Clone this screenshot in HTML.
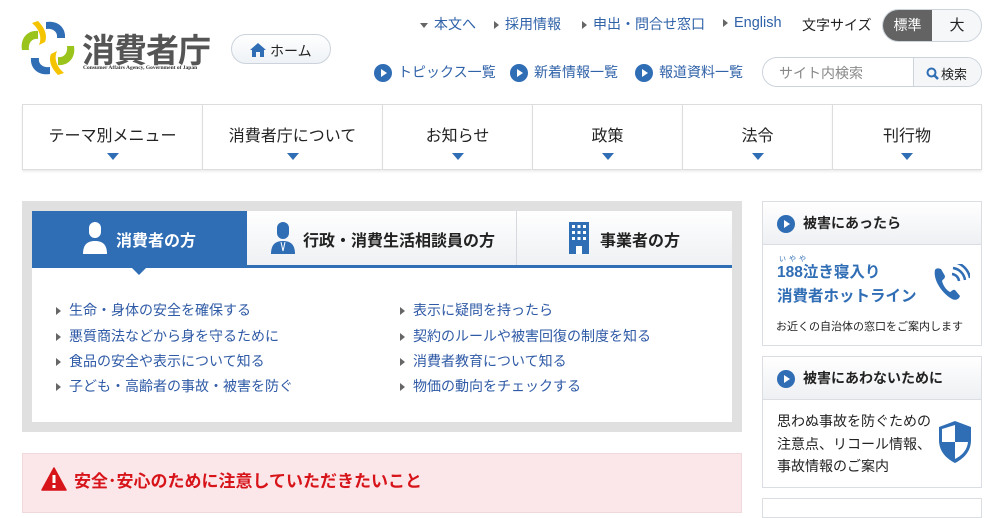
<!DOCTYPE html>
<html><head><meta charset="utf-8">
<style>
*{margin:0;padding:0;box-sizing:border-box}
body{width:1004px;height:505px;overflow:hidden;background:#fff;font-family:"Liberation Sans","Noto Sans CJK JP",sans-serif;color:#222;position:relative}
.a{position:absolute;white-space:nowrap}
.blue{color:#2f62a8}
.circ{display:inline-block;width:18px;height:18px;border-radius:50%;background:#2f6db5;position:relative;vertical-align:middle}
.circ:after{content:"";position:absolute;left:7px;top:5px;border-left:6px solid #fff;border-top:4px solid transparent;border-bottom:4px solid transparent}
.tri{display:inline-block;border-left:5px solid #666;border-top:4px solid transparent;border-bottom:4px solid transparent;margin-right:8px;vertical-align:middle}
.nav{position:absolute;top:104px;height:66px;border-top:1px solid #ddd;border-bottom:1px solid #ddd;border-left:1px solid #ddd;text-align:center;font-size:16px;padding-top:17px;box-shadow:0 2px 2px #eee}
.nav:after{content:"";position:absolute;left:50%;margin-left:-6px;top:48px;border-top:7px solid #2f6db5;border-left:6px solid transparent;border-right:6px solid transparent}
.lk{font-size:14px;color:#2f5aa6}
.side{position:absolute;left:762px;width:220px;border:1px solid #dadde2}
.sh{height:43px;background:linear-gradient(#fff,#eef0f3);border-bottom:1px solid #dadde2;font-weight:bold;font-size:14px;padding:11px 0 0 14px}
.sh .circ{margin-right:8px}
</style></head><body>
<!-- logo -->
<svg class="a" style="left:20px;top:20px" width="56" height="56" viewBox="-28 -28 56 56">
<path d="M-2,-26 C10,-28 18,-20 17,-10 L9,-10 C10,-16 5,-20 -2,-19 Z" fill="#2f6db5"/>
<path d="M26,-2 C28,10 20,18 10,17 L10,9 C16,10 20,5 19,-2 Z" fill="#9ac31c"/>
<path d="M2,26 C-10,28 -18,20 -17,10 L-9,10 C-10,16 -5,20 2,19 Z" fill="#2f6db5"/>
<path d="M-26,2 C-28,-10 -20,-18 -10,-17 L-10,-9 C-16,-10 -20,-5 -19,2 Z" fill="#9ac31c"/>
<path d="M-16,-25 C-8,-18 -6,-10 -9,-3 L-3,-6 C0,-13 -4,-21 -10,-27 Z" fill="#f5c400"/>
<path d="M16,25 C8,18 6,10 9,3 L3,6 C0,13 4,21 10,27 Z" fill="#f5c400"/>
</svg>
<div class="a" style="left:82px;top:24px;font-size:33px;color:#555;letter-spacing:-1px;font-weight:bold">消費者庁</div>
<div class="a" style="left:83px;top:65px;font-size:5.5px;color:#333;font-family:'Liberation Serif',serif;font-weight:bold">Consumer Affairs Agency, Government of Japan</div>
<div class="a" style="left:231px;top:34px;width:100px;height:30px;border:1px solid #ccd3dc;border-radius:15px;background:linear-gradient(#fff,#eef2f6);font-size:14px;padding:6px 0 0 18px"><svg width="16" height="14" viewBox="0 0 16 14" style="vertical-align:-1px;margin-right:4px"><path d="M8,0 L16,7 L14,7 L14,14 L10,14 L10,9 L6,9 L6,14 L2,14 L2,7 L0,7Z" fill="#2f6db5"/></svg>ホーム</div>
<!-- top links -->
<div class="a blue" style="left:420px;top:14px;font-size:14px"><span style="display:inline-block;border-top:5px solid #666;border-left:4px solid transparent;border-right:4px solid transparent;vertical-align:middle;margin-right:6px"></span>本文へ</div>
<div class="a blue" style="left:494px;top:14px;font-size:14px"><span class="tri" style="margin-right:6px"></span>採用情報</div>
<div class="a blue" style="left:582px;top:14px;font-size:14px"><span class="tri" style="margin-right:6px"></span>申出・問合せ窓口</div>
<div class="a blue" style="left:723px;top:15px;font-size:14.5px;line-height:17px"><span class="tri" style="margin-right:6px"></span>English</div>
<div class="a" style="left:802px;top:15px;font-size:14px">文字サイズ</div>
<div class="a" style="left:882px;top:9px;width:100px;height:33px;border:1px solid #ccd3dc;border-radius:17px;overflow:hidden;background:#f6f7f9">
<div style="position:absolute;left:0;top:0;width:49px;height:33px;background:#636363;color:#fff;font-size:14px;text-align:center;line-height:31px">標準</div>
<div style="position:absolute;left:49px;top:0;width:50px;text-align:center;font-size:15px;line-height:31px">大</div></div>
<div class="a blue" style="left:374px;top:62px;font-size:14px"><span class="circ" style="margin-right:6px"></span>トピックス一覧</div>
<div class="a blue" style="left:510px;top:62px;font-size:14px"><span class="circ" style="margin-right:6px"></span>新着情報一覧</div>
<div class="a blue" style="left:635px;top:62px;font-size:14px"><span class="circ" style="margin-right:6px"></span>報道資料一覧</div>
<div class="a" style="left:762px;top:57px;width:220px;height:30px;border:1px solid #ccd3dc;border-radius:15px;overflow:hidden">
<div style="position:absolute;left:16px;top:5px;font-size:14px;color:#888">サイト内検索</div>
<div style="position:absolute;left:150px;top:0;width:70px;height:30px;border-left:1px solid #ccd3dc;background:#f4f6f8;font-size:13px;padding:6px 0 0 12px"><svg width="13" height="13" viewBox="0 0 13 13" style="vertical-align:-1px;margin-right:2px"><circle cx="5.5" cy="5.5" r="4" stroke="#2f6db5" stroke-width="2" fill="none"/><path d="M8.5,8.5 L12,12" stroke="#2f6db5" stroke-width="2.5"/></svg>検索</div></div>
<!-- nav -->
<div class="nav" style="left:22px;width:180px">テーマ別メニュー</div>
<div class="nav" style="left:202px;width:180px">消費者庁について</div>
<div class="nav" style="left:382px;width:150px">お知らせ</div>
<div class="nav" style="left:532px;width:150px">政策</div>
<div class="nav" style="left:682px;width:150px">法令</div>
<div class="nav" style="left:832px;width:150px;border-right:1px solid #ddd">刊行物</div>
<!-- main panel -->
<div class="a" style="left:22px;top:201px;width:720px;height:231px;background:#e0e0e0"></div>
<div class="a" style="left:32px;top:211px;width:700px;height:211px;background:#fff"></div>
<div class="a" style="left:32px;top:211px;width:700px;height:55px;background:linear-gradient(#fff,#eef0f3)"></div>
<div class="a" style="left:516px;top:211px;width:1px;height:55px;background:#d6d9de"></div>
<div class="a" style="left:32px;top:265px;width:700px;height:3px;background:#2f6db5"></div>
<div class="a" style="left:32px;top:211px;width:215px;height:56px;background:#2f6db5"></div>
<div class="a" style="left:131px;top:267px;border-top:8px solid #2f6db5;border-left:8px solid transparent;border-right:8px solid transparent"></div>
<svg class="a" style="left:82px;top:222px" width="26" height="32" viewBox="0 0 26 32"><rect x="7" y="0" width="12" height="16" rx="6" fill="#fff"/><path d="M1,32 C1,22 6,19 13,19 C20,19 25,22 25,32Z" fill="#fff"/></svg>
<div class="a" style="left:116px;top:227px;color:#fff;font-weight:bold;font-size:16px">消費者の方</div>
<svg class="a" style="left:270px;top:222px" width="26" height="32" viewBox="0 0 26 32"><rect x="7" y="0" width="12" height="17" rx="6" fill="#2f6db5"/><path d="M1,32 C1,22 6,19 13,19 C20,19 25,22 25,32Z" fill="#2f6db5"/><path d="M11,20 L13,29 L15,20" stroke="#fff" stroke-width="1" fill="none"/></svg>
<div class="a" style="left:303px;top:227px;font-weight:bold;font-size:16px">行政・消費生活相談員の方</div>
<svg class="a" style="left:569px;top:222px" width="20" height="32" viewBox="0 0 20 32"><rect width="20" height="32" fill="#2f6db5"/><g fill="#fff"><rect x="3" y="3" width="3" height="3"/><rect x="8.5" y="3" width="3" height="3"/><rect x="14" y="3" width="3" height="3"/><rect x="3" y="9" width="3" height="3"/><rect x="8.5" y="9" width="3" height="3"/><rect x="14" y="9" width="3" height="3"/><rect x="3" y="15" width="3" height="3"/><rect x="8.5" y="15" width="3" height="3"/><rect x="14" y="15" width="3" height="3"/><rect x="7" y="24" width="6" height="8"/></g></svg>
<div class="a" style="left:600px;top:227px;font-weight:bold;font-size:16px">事業者の方</div>
<div class="a lk" style="left:56px;top:300px"><span class="tri"></span>生命・身体の安全を確保する</div>
<div class="a lk" style="left:56px;top:326px"><span class="tri"></span>悪質商法などから身を守るために</div>
<div class="a lk" style="left:56px;top:351px"><span class="tri"></span>食品の安全や表示について知る</div>
<div class="a lk" style="left:56px;top:376px"><span class="tri"></span>子ども・高齢者の事故・被害を防ぐ</div>
<div class="a lk" style="left:400px;top:300px"><span class="tri"></span>表示に疑問を持ったら</div>
<div class="a lk" style="left:400px;top:326px"><span class="tri"></span>契約のルールや被害回復の制度を知る</div>
<div class="a lk" style="left:400px;top:351px"><span class="tri"></span>消費者教育について知る</div>
<div class="a lk" style="left:400px;top:376px"><span class="tri"></span>物価の動向をチェックする</div>
<!-- alert -->
<div class="a" style="left:22px;top:453px;width:720px;height:60px;background:#fbe7e9;border:1px solid #efd9dc"></div>
<svg class="a" style="left:41px;top:467px" width="26" height="24" viewBox="0 0 26 24"><path d="M13,1 L25,23 L1,23Z" fill="#d7141a" stroke="#d7141a" stroke-width="1.5" stroke-linejoin="round"/><rect x="11.5" y="8" width="3" height="8" fill="#fff"/><rect x="11.5" y="18" width="3" height="3" fill="#fff"/></svg>
<div class="a" style="left:74px;top:467px;color:#d7141a;font-weight:bold;font-size:17px">安全･安心のために注意していただきたいこと</div>
<!-- sidebar -->
<div class="side" style="top:201px;height:145px">
<div class="sh"><span class="circ"></span>被害にあったら</div>
<div class="a" style="left:16px;top:52px;font-size:7px;color:#2f6db5;letter-spacing:3px">いやや</div>
<div class="a" style="left:14px;top:59px;font-size:15.5px;font-weight:bold;color:#2f6db5;line-height:24px">188泣き寝入り<br>消費者ホットライン</div>
<svg class="a" style="left:167px;top:62px" width="40" height="40" viewBox="0 0 40 40"><path d="M5,6 C3,14 10,28 22,35 C26,37 29,35 30,32 L25,26 C23,25 22,27 20,28 C16,26 13,21 12,17 C13,15 15,15 15,12 L11,5 C8,4 6,4 5,6Z" fill="#2f6db5"/><path d="M22,10 A8,8 0 0 1 29,17 M23,4 A14,14 0 0 1 35,16 M24,-2 A20,20 0 0 1 40,14" stroke="#2f6db5" stroke-width="2.5" fill="none"/></svg>
<div class="a" style="left:13px;top:116px;font-size:11px">お近くの自治体の窓口をご案内します</div>
</div>
<div class="side" style="top:356px;height:132px">
<div class="sh"><span class="circ"></span>被害にあわないために</div>
<div class="a" style="left:14px;top:53px;font-size:14px;line-height:22.5px">思わぬ事故を防ぐための<br>注意点、リコール情報、<br>事故情報のご案内</div>
<svg class="a" style="left:175px;top:63px" width="34" height="44" viewBox="0 0 34 44"><path d="M17,1 L33,7 L33,20 C33,32 25,39 17,43 C9,39 1,32 1,20 L1,7Z" fill="#2f6db5"/><path d="M17,5 L17,22 L4,22 L4,9Z M17,22 L30,22 C29,31 23,36 17,39Z" fill="#fff"/></svg>
</div>
<div class="side" style="top:498px;height:20px"></div>
</body></html>
